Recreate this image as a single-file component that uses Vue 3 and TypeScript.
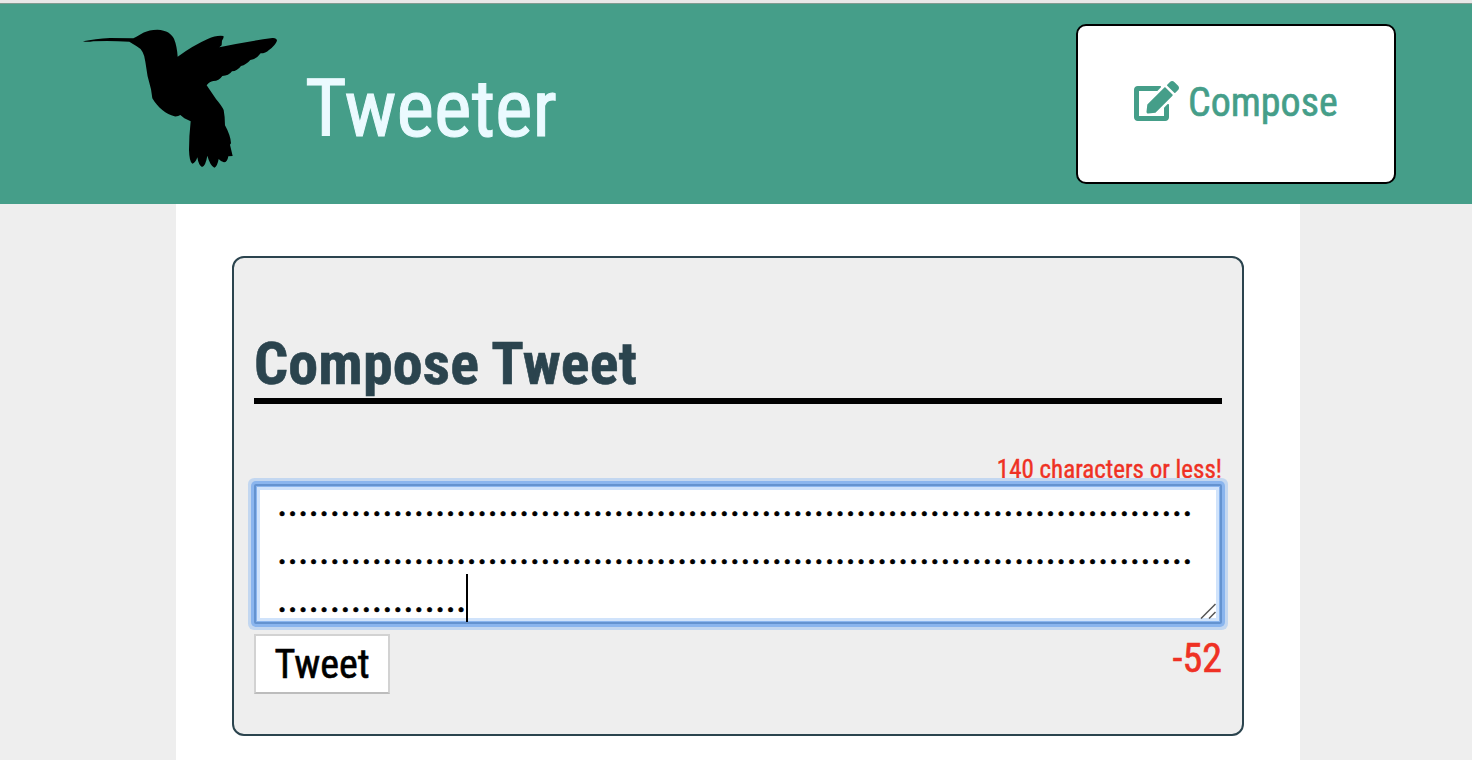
<script setup lang="ts">
import { computed, ref } from 'vue'

const limit = 140
const perLine = 87
const draft = ref('.'.repeat(192))
const remaining = computed(() => limit - draft.value.length)
const lines = computed(() => {
  const out: string[] = []
  for (let i = 0; i < draft.value.length; i += perLine) out.push(draft.value.slice(i, i + perLine))
  return out
})
</script>

<template>
  <div class="page">
    <header class="nav">
      <div class="brand">
        <svg class="bird" viewBox="0 0 220 210" width="220" height="210">
          <path
            transform="scale(.33333)"
            d="M39 124Q75 116 120 114L190 115C212 103 228 89 262 89C290 90 305 102 312 116Q321 138 323 170Q370 136 413 117Q440 105 460 108Q463 113 456 122L455 136L448 142Q520 126 607 114Q620 113 621 122Q616 136 597 150Q587 160 572 160Q560 177 541 180Q529 194 513 198Q502 213 486 214Q476 228 457 228Q447 243 430 243Q419 244 410 256L438 297Q455 317 461 330Q465 350 465 376Q482 407 483 430L480 434L488 468L475 469Q472 487 462 487Q454 486 446 477Q442 500 433 503Q420 496 412 467Q407 498 396 501Q386 497 382 472Q376 490 367 491Q358 486 357 450Q357 410 362 364L343 355L331 345Q324 350 313 349C290 344 262 322 247 295L243 268Q231 230 226 185Q222 150 200 139L178 125Q120 122 70 124Q50 127 39 124Z"
          />
        </svg>
        <h1 class="title">Tweeter</h1>
      </div>
      <button class="compose">
        <svg class="edit" viewBox="0 0 576 512" width="45" height="40">
          <path
            d="M402.6 83.2l90.2 90.2c3.8 3.8 3.8 10 0 13.8L274.4 405.6l-92.8 10.3c-12.4 1.4-22.9-9.1-21.5-21.5l10.3-92.8L388.8 83.2c3.8-3.8 10-3.8 13.8 0zm162-22.9l-48.8-48.8c-15.2-15.2-39.9-15.2-55.2 0l-35.4 35.4c-3.8 3.8-3.8 10 0 13.8l90.2 90.2c3.8 3.8 10 3.8 13.8 0l35.4-35.4c15.2-15.3 15.2-40 0-55.2zM384 346.2V448H64V128h229.8c3.2 0 6.2-1.3 8.5-3.5l40-40c7.6-7.6 2.2-20.5-8.5-20.5H48C21.5 64 0 85.5 0 112v352c0 26.5 21.5 48 48 48h352c26.5 0 48-21.5 48-48V306.2c0-10.7-12.9-16-20.5-8.5l-40 40c-2.2 2.3-3.5 5.3-3.5 8.5z"
          />
        </svg>
        <span class="compose-label">Compose</span>
      </button>
    </header>
    <main class="container">
      <section class="card">
        <h2 class="heading">Compose Tweet</h2>
        <div class="warning">140 characters or less!</div>
        <div class="field">
          <div v-for="(line, i) in lines" :key="i" class="line">
            <span class="dots">{{ line }}</span><i v-if="i === lines.length - 1" class="caret"></i>
          </div>
          <svg class="grip" viewBox="0 0 16 16" width="16" height="16">
            <path d="M1 15.5L15.5 1M9 15.5L15.5 9" />
          </svg>
        </div>
        <div class="actions">
          <button class="submit">Tweet</button>
          <span class="counter">{{ remaining }}</span>
        </div>
      </section>
    </main>
  </div>
</template>

<style>
html,
body {
  margin: 0;
  overflow: hidden;
}
</style>

<style scoped>
.page {
  box-sizing: border-box;
  width: 1472px;
  height: 760px;
  overflow: hidden;
  display: flex;
  flex-direction: column;
  border-top: 3px solid #e8e8e8;
  background: #eee;
  font-family: 'Roboto Condensed', Roboto, 'Liberation Sans', sans-serif;
  font-stretch: 75%;
  -webkit-text-stroke-width: 0.6px;
}
h1,
h2 {
  margin: 0;
}
button {
  box-sizing: border-box;
  font: inherit;
  padding: 0;
}
.nav {
  box-sizing: border-box;
  height: 201px;
  flex: none;
  display: flex;
  justify-content: space-between;
  padding: 0 76px 0 70px;
  border-top: 1px solid #819b91;
  background: #459e89;
}
.brand {
  display: flex;
}
.bird {
  display: block;
  margin-top: -4px;
}
.title {
  margin: 58px 0 0 15px;
  font-size: 80px;
  line-height: 94px;
  font-weight: 400;
  color: #ebfaff;
  white-space: nowrap;
  -webkit-text-stroke-width: 1px;
}
.compose {
  width: 320px;
  height: 160px;
  margin-top: 20px;
  display: flex;
  padding: 53px 0 0 56px;
  border: 2px solid #000;
  border-radius: 10px;
  background: #fff;
  color: #459e89;
  font-size: 40px;
  line-height: 47px;
}
.edit {
  fill: currentColor;
  margin: 2px 9px 0 0;
  flex: none;
}
.container {
  box-sizing: border-box;
  width: 1124px;
  margin-left: 176px;
  flex: 1;
  padding: 52px 56px 24px;
  background: #fff;
}
.card {
  box-sizing: border-box;
  height: 480px;
  padding: 71px 20px 0;
  border: 2px solid #2b444e;
  border-radius: 12px;
  background: #eee;
}
.heading {
  height: 69px;
  border-bottom: 6px solid #000;
  font-size: 60px;
  line-height: 70px;
  font-weight: 700;
  letter-spacing: 0.15px;
  color: #2b444e;
  white-space: nowrap;
}
.warning {
  height: 80px;
  box-sizing: border-box;
  padding-top: 51px;
  text-align: right;
  font-size: 25px;
  line-height: 29px;
  color: #ef3124;
  -webkit-text-stroke-width: 0.4px;
}
.field {
  position: relative;
  box-sizing: border-box;
  height: 140px;
  padding: 0 20px 0 21px;
  border: 2px solid #6493d0;
  background: #fff;
  box-shadow:
    inset 0 0 0 1px #8ab5ee,
    inset 0 0 0 4px #d0e3fb,
    0 0 0 3px #8ab5ee,
    0 0 0 6px #c3d7f0;
  border-radius: 2px;
  font-size: 40px;
  color: #000;
}
.line {
  display: flex;
  height: 48px;
  line-height: 48px;
  letter-spacing: -0.02px;
}
.line:first-child {
  height: 41px;
  line-height: 34px;
}
.caret {
  width: 2px;
  height: 48px;
  margin-top: -1px;
  background: #000;
}
.grip {
  position: absolute;
  right: 4px;
  bottom: 3px;
  fill: none;
  stroke: #555;
  stroke-width: 1.5;
}
.actions {
  display: flex;
  justify-content: space-between;
  padding-top: 10px;
  font-size: 40px;
}
.submit {
  width: 136px;
  height: 60px;
  border: 2px solid #d2d2d2;
  border-bottom-color: #bcbcbc;
  background: #fff;
  color: #000;
}
.counter {
  margin-top: 1px;
  line-height: 47px;
  color: #ef3124;
}
</style>
